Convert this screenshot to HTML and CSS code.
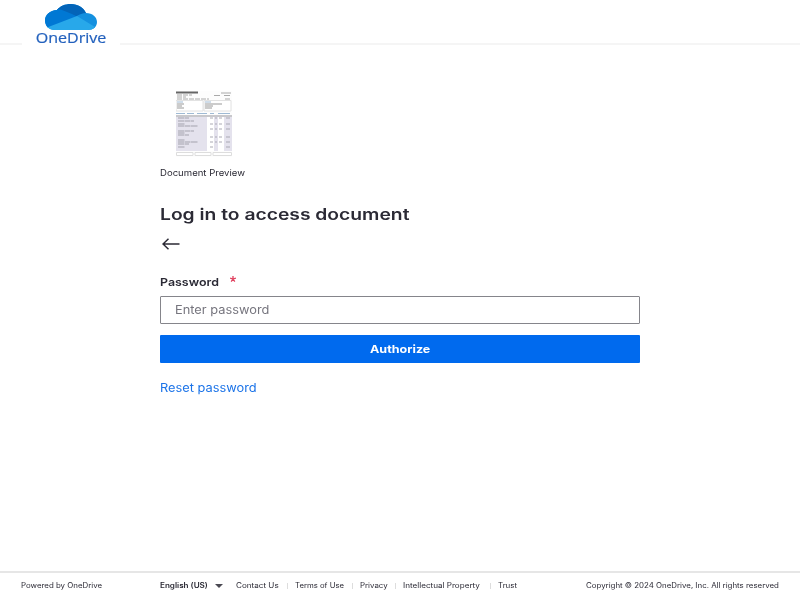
FILE: index.html
```html
<!DOCTYPE html>
<html lang="en">
<head>
<meta charset="utf-8">
<title>OneDrive</title>
<link rel="stylesheet" href="styles.css">
</head>
<body>
<header class="header">
  <div class="logo">
    <svg class="cloud" width="52" height="26" viewBox="0 0 52 26" aria-hidden="true">
      <defs><clipPath id="c"><path d="M10 26C3.500 26 0 21.500 0 16.500C0 10.500 5 6.500 12 6C15 2 20 0 26 0C33 0 38.500 3.500 41 9C47.500 9 52 13 52 18C52 23 48 26 43 26Z"/></clipPath></defs>
      <g clip-path="url(#c)">
        <rect width="52" height="26" fill="#1490df"/>
        <path d="M10 6L12 0H44L42 9Q37 8.500 31 12.500L22 9Z" fill="#0364b8"/>
        <path d="M0 5H13Q19 6 32 12.500L0 25Z" fill="#0078d4"/>
        <path d="M2 23.500L32 12L50 23V26H4Z" fill="#28a8ea"/>
      </g>
    </svg>
    <span class="brand">OneDrive</span>
  </div>
</header>
<main class="main">
  <svg class="preview" width="56" height="66" viewBox="0 0 56 66" aria-hidden="true">
    <rect width="56" height="66" fill="#fdfdfd"/>
    <path d="M0 1.500H22" stroke="#666" stroke-width="2"/>
    <path d="M45 2H55M38 4.500H44M48 4.500H54" stroke="#aaa"/>
    <path d="M1 4H16M1 6H10M1 8H33M49 8H54" stroke="#aaa" stroke-dasharray="5 1"/>
    <path d="M0 9.500H27V20H0ZM28 9.500H55V20H28Z" fill="#fff" stroke="#e2e2e2"/>
    <path d="M1 11H7M29 11H35M0 22.500H9M11 22.500H18M21 22.500H31M34 22.500H38M42 22.500H54" stroke="#9fbad4"/>
    <path d="M1 13H8M1 15H6M1 17H8M29 13H46M29 15H37M29 17H36" stroke="#999"/>
    <path d="M0 24.500H56V60H0Z" fill="#fff"/>
    <path d="M0 25H31V60H0ZM38 25H42V60H38ZM48 25H56V60H48Z" fill="#e4e2ed"/>
    <path d="M0 25H56" stroke="#c8c8cc" stroke-width="2"/>
    <path d="M2 27H13M2 30H18M2 33H9M2 35H22M2 40H18M2 42H9M2 44H13M2 49H9M2 51H22M2 53H13M2 56H9" stroke="#a3a2ad" stroke-dasharray="6 .5"/>
    <path d="M34 27H37M39 27H41M43 27H46M50 27H54M34 33H37M39 33H41M43 33H46M50 33H54M34 38H37M39 38H41M43 38H46M50 38H54M34 46H37M39 46H41M43 46H46M50 46H54M34 51H37M39 51H41M43 51H46M50 51H54M34 56H37M50 56H54" stroke="#aaa9b4"/>
    <path d="M.5 61.500H17V64.500H.5ZM19 61.500H35V64.500H19ZM37 61.500H55.500V64.500H37Z" fill="#fff" stroke="#ddd"/>
  </svg>
  <p class="caption"><span class="t s-caption">Document Preview</span></p>
  <h1 class="title"><span class="t s-title">Log in to access document</span></h1>
  <a class="back" href="#" aria-label="Back">
    <svg width="18" height="12" viewBox="0 0 18 12" fill="none" stroke="#2b2a35" stroke-width="1.500"><path d="M17.500 6H1M6.500 .8L1 6L6.500 11.200"/></svg>
  </a>
  <form class="form">
    <label class="label"><span class="t s-label">Password</span><svg class="star" width="6" height="6" viewBox="0 0 6 6" stroke="#e0425f" stroke-width="1.300"><path d="M3 0V3M3 3L.1 2M3 3L5.900 2M3 3L1.200 5.600M3 3L4.800 5.600"/></svg></label>
    <div class="field"><span class="t s-field">Enter password</span></div>
    <button class="submit" type="button"><span class="t s-submit">Authorize</span></button>
  </form>
  <a class="reset" href="#"><span class="t s-reset">Reset password</span></a>
</main>
<footer class="footer">
  <div class="powered"><span class="t s-powered">Powered by OneDrive</span></div>
  <div class="lang"><span class="t s-lang">English (US)</span><i class="caret"></i></div>
  <nav class="links">
    <a class="l1"><span class="t s-l1">Contact Us</span></a>
    <a class="l2"><span class="t s-l2">Terms of Use</span></a>
    <a class="l3"><span class="t s-l3">Privacy</span></a>
    <a class="l4"><span class="t s-l4">Intellectual Property</span></a>
    <a class="l5"><span class="t s-l5">Trust</span></a>
  </nav>
  <div class="copy"><span class="t s-copy">Copyright © 2024 OneDrive, Inc. All rights reserved</span></div>
</footer>
</body>
</html>
```

FILE: styles.css
```css
* { box-sizing: border-box; }
body {
  margin: 0;
  height: 600px;
  display: flex;
  flex-direction: column;
  overflow: hidden;
  background: #fff;
  color: #2b2a35;
  font-family: Inter, "Liberation Sans", sans-serif;
}
a { color: inherit; text-decoration: none; }
.t { display: inline-block; white-space: nowrap; transform-origin: left center; }

.header { height: 45px; border-bottom: 2px solid #f5f5f5; padding-left: 22px; }
.logo { width: 98px; height: 50px; background: #fff; display: flex; flex-direction: column; align-items: center; padding-top: 4px; }
.cloud { display: block; flex: none; }
.brand { font: 15px/15px "Open Sans", sans-serif; color: #2361bd; -webkit-text-stroke: .2px #2361bd; transform: scaleX(1.07); margin-left: 1px; }

.main { width: 480px; margin: 0 auto; flex: 1; padding-top: 46px; }
.preview { display: block; margin-left: 16px; filter: blur(.5px); }
.caption { margin: 9px 0 0; font-size: 8.5px; line-height: 14px; }
.title { margin: 24px 0 0; font-size: 15.5px; line-height: 22px; font-weight: 600; }
.back { display: block; margin: 12px 0 0 1.5px; height: 12px; }
.back svg { display: block; }
.label { display: block; margin-top: 24px; height: 16px; font-size: 11px; line-height: 16px; font-weight: 600; position: relative; }
.star { position: absolute; left: 70px; top: 2px; }
.field { margin-top: 6px; height: 28px; border: 1px solid #85858b; border-radius: 1px; padding-left: 14px; font-size: 11.5px; line-height: 26px; color: #76757e; }
.submit { display: flex; width: 480px; height: 28px; margin-top: 11px; padding: 0 0 0 210px; align-items: center; border: 0; border-radius: 1px; background: #006aee; color: #fff; font: 700 11px/28px Inter, sans-serif; }
.reset { display: block; margin-top: 17px; font-size: 11.5px; line-height: 17px; color: #1b73e8; }

.footer { height: 29px; border-top: 2px solid #e6e6e6; display: flex; padding-left: 21px; font-size: 7.3px; line-height: 26px; }
.powered { width: 139px; }
.lang { width: 76px; font-weight: 600; position: relative; }
.caret { position: absolute; left: 55px; top: 11px; border: 4px solid transparent; border-top-color: #4a4952; border-bottom: 0; }
.links { display: flex; width: 350px; }
.links a { position: relative; flex: none; }
.links a + a::before { content: ""; position: absolute; left: -8px; top: 10px; width: 1px; height: 6px; background: #ddd; }
.l1 { width: 59px; }
.l2 { width: 65px; }
.l3 { width: 43px; }
.l4 { width: 95px; }
.l5 { width: 30px; }

.s-caption { transform: scaleX(1.125); }
.s-title { transform: scaleX(1.243); }
.s-label { transform: scaleX(1.13); }
.s-field { transform: scaleX(1.115); }
.s-submit { transform: scaleX(1.14); }
.s-reset { transform: scaleX(1.115); }
.s-powered { transform: scaleX(1.08); }
.s-lang { transform: scaleX(1.11); }
.s-l1 { transform: scaleX(1.11); }
.s-l2 { transform: scaleX(1.06); }
.s-l3 { transform: scaleX(1.08); }
.s-l4 { transform: scaleX(1.11); }
.s-l5 { transform: scaleX(1.08); }
.s-copy { transform: scaleX(1.08); }
```
